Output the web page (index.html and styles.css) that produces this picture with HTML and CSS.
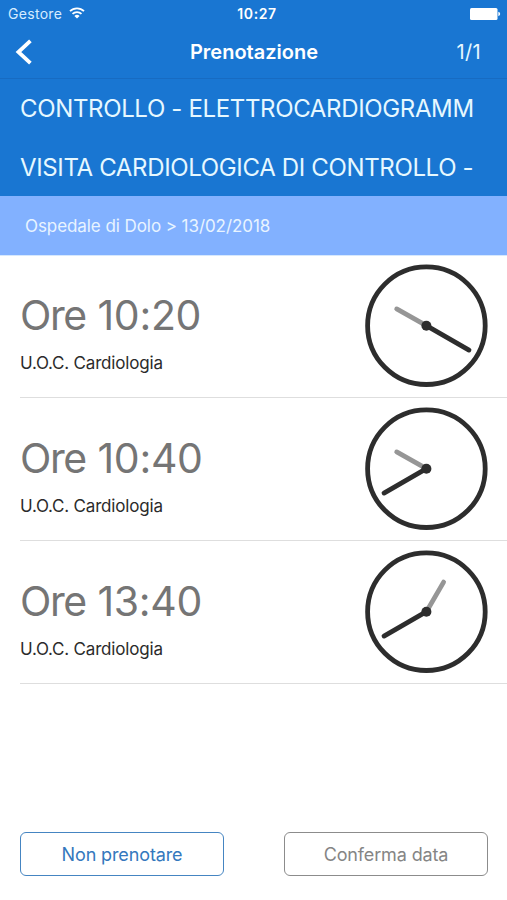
FILE: index.html
```html
<!DOCTYPE html>
<html lang="it">
<head>
    <meta charset="UTF-8">
    <meta name="viewport" content="width=device-width, initial-scale=1.0">
    <title>Prenotazione</title>
    <link rel="stylesheet" href="styles.css">
</head>
<body>
    <div class="screen">
        <div class="status-bar">
            <div class="carrier">
                <span>Gestore</span>
                <svg class="wifi" width="16" height="12" viewBox="0 0 16 12" fill="none" stroke="#fff" stroke-width="1.8">
                    <path d="M1 4.2a10 10 0 0 1 14 0"/>
                    <path d="M3.5 6.9a6.4 6.4 0 0 1 9 0"/>
                    <path d="M8 11.6L5.4 9a3.7 3.7 0 0 1 5.2 0z" fill="#fff" stroke="none"/>
                </svg>
            </div>
            <div class="clock-time">10:27</div>
            <div class="battery">
                <svg width="31" height="12" viewBox="0 0 31 12" fill="#fff">
                    <rect x="0" y="0" width="27.5" height="12" rx="1.5"/>
                    <path d="M28.3 3.8q1.9.6 1.9 2.2t-1.9 2.2z"/>
                </svg>
            </div>
        </div>

        <div class="nav-bar">
            <button class="back-button" aria-label="Indietro">
                <svg width="18" height="26" viewBox="0 0 18 26" fill="none" stroke="#fff" stroke-width="3.8">
                    <path d="M16.4 1.8L4.4 13l12 11.2"/>
                </svg>
            </button>
            <h1 class="nav-title">Prenotazione</h1>
            <span class="page-count">1/1</span>
        </div>

        <div class="exams">
            <div class="exam">CONTROLLO - ELETTROCARDIOGRAMM</div>
            <div class="exam">VISITA CARDIOLOGICA DI CONTROLLO -</div>
        </div>
        <div class="place">Ospedale di Dolo &gt; 13/02/2018</div>

        <div class="slots">
            <div class="slot">
                <div class="slot-info">
                    <div class="slot-time">Ore <span class="hhmm">10:20</span></div>
                    <div class="slot-unit">U.O.C. Cardiologia</div>
                </div>
                <svg class="clock" viewBox="0 0 124 124">
                    <circle class="face" cx="62.4" cy="61.7" r="58.8"/>
                    <path class="hour" d="M62.4 61.7L32.7 44.9"/>
                    <path class="minute" d="M62.4 61.7L105 86.1"/>
                    <circle class="pin" cx="62.4" cy="61.7" r="5"/>
                </svg>
            </div>
            <div class="slot">
                <div class="slot-info">
                    <div class="slot-time">Ore <span class="hhmm">10:40</span></div>
                    <div class="slot-unit">U.O.C. Cardiologia</div>
                </div>
                <svg class="clock" viewBox="0 0 124 124">
                    <circle class="face" cx="62.4" cy="61.7" r="58.8"/>
                    <path class="hour" d="M62.4 61.7L32.7 44.9"/>
                    <path class="minute" d="M62.4 61.7L20 86.1"/>
                    <circle class="pin" cx="62.4" cy="61.7" r="5"/>
                </svg>
            </div>
            <div class="slot">
                <div class="slot-info">
                    <div class="slot-time">Ore <span class="hhmm">13:40</span></div>
                    <div class="slot-unit">U.O.C. Cardiologia</div>
                </div>
                <svg class="clock" viewBox="0 0 124 124">
                    <circle class="face" cx="62.4" cy="61.7" r="58.8"/>
                    <path class="hour" d="M62.4 61.7L79.6 32.1"/>
                    <path class="minute" d="M62.4 61.7L20 86.1"/>
                    <circle class="pin" cx="62.4" cy="61.7" r="5"/>
                </svg>
            </div>
        </div>

        <div class="actions">
            <button class="action decline">Non prenotare</button>
            <button class="action confirm">Conferma data</button>
        </div>
    </div>
</body>
</html>
```
FILE: styles.css
```css
* {
    box-sizing: border-box;
}

body {
    margin: 0;
    font-family: Inter, "Liberation Sans", sans-serif;
    background-color: #ffffff;
}

.screen {
    display: flex;
    flex-direction: column;
    width: 507px;
    height: 900px;
    overflow: hidden;
}

.status-bar {
    display: grid;
    grid-template-columns: 1fr auto 1fr;
    align-items: center;
    height: 27px;
    padding: 0 7px;
    background-color: #1976d2;
    color: #ffffff;
    font-size: 14px;
}

.carrier {
    display: flex;
    align-items: center;
    gap: 7px;
    padding-left: 1px;
    color: #d6ecff;
    letter-spacing: 0.3px;
}

.wifi {
    margin-top: -2px;
}

.clock-time {
    padding-left: 7px;
    font-weight: 600;
    letter-spacing: 0.6px;
}

.battery {
    display: flex;
    justify-content: flex-end;
    margin-right: -1px;
}

.nav-bar {
    display: grid;
    grid-template-columns: 1fr auto 1fr;
    align-items: center;
    height: 52px;
    padding: 0 13px 1px 14px;
    border-bottom: 1px solid #176bc2;
    background-color: #1976d2;
    color: #ffffff;
}

.back-button {
    display: flex;
    justify-self: start;
    padding: 0;
    border: none;
    background: none;
}

.nav-title {
    margin: 0;
    font-size: 20px;
    font-weight: 600;
}

.page-count {
    justify-self: end;
    margin-right: 13px;
    color: #e6f8ff;
    font-size: 20px;
    letter-spacing: 0.3px;
}

.exams {
    background-color: #1976d2;
    color: #e6f8ff;
}

.exam {
    height: 58.5px;
    padding-left: 20px;
    font-size: 24px;
    letter-spacing: -0.35px;
    line-height: 60px;
    white-space: nowrap;
}

.place {
    height: 59px;
    padding-left: 25px;
    background-color: #82b1ff;
    color: #e8f4ff;
    font-size: 17px;
    letter-spacing: -0.07px;
    line-height: 60px;
}

.slots {
    padding-left: 20px;
    border-top: 1px solid #d6e8fd;
}

.slot {
    display: flex;
    justify-content: space-between;
    height: 143px;
    padding: 9px 19px 0 0;
    border-bottom: 1px solid #dedede;
}

/* makes room for the line above the list */
.slot:first-child {
    height: 142px;
    padding-top: 8px;
}

.slot-info {
    padding-top: 26px;
}

.slot-time {
    color: #757575;
    font-size: 41px;
    letter-spacing: -1.4px;
    line-height: 50px;
}

.hhmm {
    margin-left: 1.5px;
    letter-spacing: -0.3px;
}

.slot-unit {
    margin-top: 12px;
    color: #2b2b2b;
    font-size: 17px;
    letter-spacing: -0.17px;
    line-height: 22px;
}

.clock {
    width: 124px;
    height: 124px;
    fill: none;
    stroke-linecap: round;
    stroke-width: 4.8;
}

.face {
    stroke: #2d2d2d;
}

.hour {
    stroke: #969696;
}

.minute {
    stroke: #2d2d2d;
}

.pin {
    fill: #2d2d2d;
}

.actions {
    display: flex;
    justify-content: space-between;
    margin-top: auto;
    padding: 0 19px 24px 20px;
}

.action {
    width: 204px;
    height: 44px;
    border: 1.5px solid;
    border-radius: 6px;
    background-color: #ffffff;
    font-family: inherit;
    font-size: 18px;
    letter-spacing: -0.13px;
}

.decline {
    border-color: #4585c2;
    color: #3478bd;
}

.confirm {
    border-color: #8c8c8c;
    color: #858585;
}
```
